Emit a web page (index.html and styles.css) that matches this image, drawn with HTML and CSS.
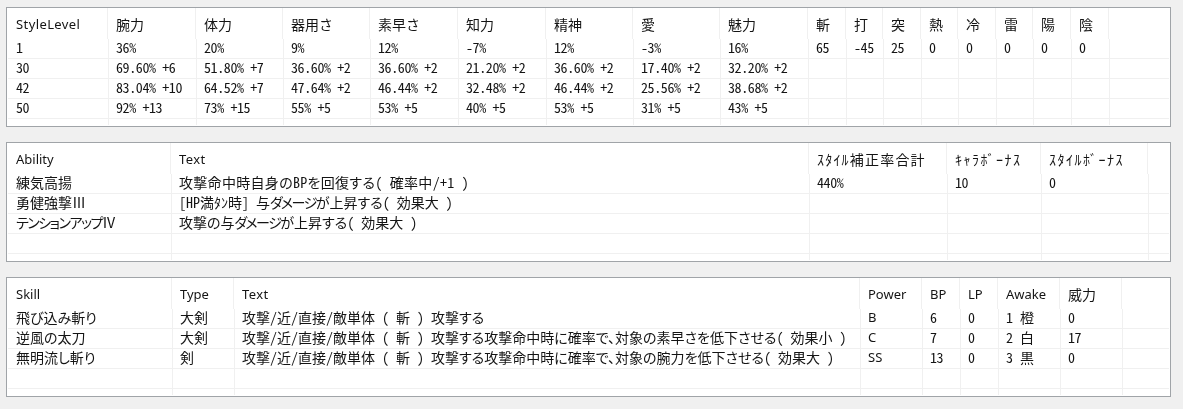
FILE: index.html
```html
<!DOCTYPE html>
<html lang="ja">
<head>
<meta charset="utf-8">
<title>Style detail</title>
<link rel="stylesheet" href="styles.css">
</head>
<body>
<section class="panel">
<table class="grid stats">
<colgroup><col class="c100"><col class="c88"><col class="c87"><col class="c87"><col class="c88"><col class="c88"><col class="c87"><col class="c87"><col class="c88"><col class="c38"><col class="c37"><col class="c38"><col class="c37"><col class="c38"><col class="c37"><col class="c38"><col class="c38"><col></colgroup>
<thead><tr><th class="wide">StyleLevel</th><th class="cjk">腕力</th><th class="cjk">体力</th><th class="cjk">器用さ</th><th class="cjk">素早さ</th><th class="cjk">知力</th><th class="cjk">精神</th><th class="cjk">愛</th><th class="cjk">魅力</th><th class="cjk">斬</th><th class="cjk">打</th><th class="cjk">突</th><th class="cjk">熱</th><th class="cjk">冷</th><th class="cjk">雷</th><th class="cjk">陽</th><th class="cjk">陰</th><th></th></tr></thead>
<tbody>
<tr><td>1</td><td>36%</td><td>20%</td><td>9%</td><td>12%</td><td>-7%</td><td>12%</td><td>-3%</td><td>16%</td><td>65</td><td>-45</td><td>25</td><td>0</td><td>0</td><td>0</td><td>0</td><td>0</td><td></td></tr>
<tr><td>30</td><td>69.60% +6</td><td>51.80% +7</td><td>36.60% +2</td><td>36.60% +2</td><td>21.20% +2</td><td>36.60% +2</td><td>17.40% +2</td><td>32.20% +2</td><td></td><td></td><td></td><td></td><td></td><td></td><td></td><td></td><td></td></tr>
<tr><td>42</td><td>83.04% +10</td><td>64.52% +7</td><td>47.64% +2</td><td>46.44% +2</td><td>32.48% +2</td><td>46.44% +2</td><td>25.56% +2</td><td>38.68% +2</td><td></td><td></td><td></td><td></td><td></td><td></td><td></td><td></td><td></td></tr>
<tr><td>50</td><td>92% +13</td><td>73% +15</td><td>55% +5</td><td>53% +5</td><td>40% +5</td><td>53% +5</td><td>31% +5</td><td>43% +5</td><td></td><td></td><td></td><td></td><td></td><td></td><td></td><td></td><td></td></tr>
<tr class="stub"><td></td><td></td><td></td><td></td><td></td><td></td><td></td><td></td><td></td><td></td><td></td><td></td><td></td><td></td><td></td><td></td><td></td><td></td></tr>
</tbody>
</table>
</section>
<section class="panel">
<table class="grid ability">
<colgroup><col class="c163"><col class="c638"><col class="c138"><col class="c94"><col class="c107"><col></colgroup>
<thead><tr><th>Ability</th><th class="wide">Text</th><th class="cjk kana-mixed">ｽﾀｲﾙ補正率合計</th><th class="cjk kana">ｷｬﾗﾎﾞｰﾅｽ</th><th class="cjk kana">ｽﾀｲﾙﾎﾞｰﾅｽ</th><th></th></tr></thead>
<tbody>
<tr><td class="txt">練気高揚</td><td class="txt long">攻撃命中時自身のBPを回復する( 確率中/+1 )</td><td>440%</td><td>10</td><td>0</td><td></td></tr>
<tr><td class="txt">勇健強撃Ⅲ</td><td class="txt">[HP満ﾀﾝ時] 与<span class="tight">ダメージ</span>が上昇する( 効果大 )</td><td></td><td></td><td></td><td></td></tr>
<tr><td class="txt"><span class="tight">テンションアップ</span>Ⅳ</td><td class="txt">攻撃の与<span class="tight">ダメージ</span>が上昇する( 効果大 )</td><td></td><td></td><td></td><td></td></tr>
<tr><td></td><td></td><td></td><td></td><td></td><td></td></tr>
<tr class="stub"><td></td><td></td><td></td><td></td><td></td><td></td></tr>
</tbody>
</table>
</section>
<section class="panel">
<table class="grid skill">
<colgroup><col class="c164"><col class="c62"><col class="c626"><col class="c62"><col class="c38"><col class="c38"><col class="c62"><col class="c62"><col></colgroup>
<thead><tr><th>Skill</th><th>Type</th><th class="wide">Text</th><th>Power</th><th>BP</th><th>LP</th><th>Awake</th><th class="cjk">威力</th><th></th></tr></thead>
<tbody>
<tr><td class="txt">飛び込み斬り</td><td class="txt">大剣</td><td class="txt">攻撃/近/直接/敵単体 ( 斬 ) 攻撃する</td><td class="rank">B</td><td>6</td><td>0</td><td class="txt">1 橙</td><td>0</td><td></td></tr>
<tr><td class="txt">逆風の太刀</td><td class="txt">大剣</td><td class="txt">攻撃/近/直接/敵単体 ( 斬 ) 攻撃する攻撃命中時に確率で、対象の素早さを低下させる( 効果小 )</td><td class="rank">C</td><td>7</td><td>0</td><td class="txt">2 白</td><td>17</td><td></td></tr>
<tr><td class="txt">無明流し斬り</td><td class="txt">剣</td><td class="txt">攻撃/近/直接/敵単体 ( 斬 ) 攻撃する攻撃命中時に確率で、対象の腕力を低下させる( 効果大 )</td><td class="rank">SS</td><td>13</td><td>0</td><td class="txt">3 黒</td><td>0</td><td></td></tr>
<tr><td></td><td></td><td></td><td></td><td></td><td></td><td></td><td></td><td></td></tr>
<tr class="stub"><td></td><td></td><td></td><td></td><td></td><td></td><td></td><td></td><td></td></tr>
</tbody>
</table>
</section>
</body>
</html>
```

FILE: styles.css
```css
html, body {
  margin: 0;
  background: #f0f0f0;
}
body {
  padding: 7px 12px 0 6px;
  font-family: "Noto Sans CJK JP", "Noto Sans", sans-serif;
  font-size: 13px;
  color: #141414;
}
.panel {
  box-sizing: border-box;
  height: 120px;
  margin-bottom: 15px;
  padding: 0 1px 1px 1px;
  background: #fff;
  border: 1px solid #a0a4a8;
  overflow: hidden;
}
.grid {
  table-layout: fixed;
  width: 100%;
  height: 117px;
  border-collapse: separate;
  border-spacing: 0;
  filter: blur(0.3px);
}
.grid th {
  height: 31px;
  padding: 0 0 0 8px;
  text-align: left;
  font-family: "Noto Sans", sans-serif;
  font-weight: 400;
  font-size: 13px;
  line-height: 16px;
  border-right: 1px solid #f0f0f0;
  white-space: nowrap;
  box-sizing: border-box;
}
.grid th:last-child { border-right: 0; }
.grid th.wide { letter-spacing: 0.4px; }
.grid th.cjk {
  font-family: "Noto Sans CJK JP", sans-serif;
  font-size: 14px;
}
.grid th.kana { letter-spacing: 1.5px; }
.grid th.kana-mixed { letter-spacing: 1.2px; }
.grid td {
  height: 20px;
  padding: 0 0 3px 7px;
  font-size: 14px;
  letter-spacing: -0.4px;
  font-feature-settings: "hwid" 1;
  line-height: 16px;
  border-left: 1px solid #f0f0f0;
  border-bottom: 1px solid #f0f0f0;
  white-space: nowrap;
  box-sizing: border-box;
}
.grid td.txt {
  letter-spacing: 0;
  font-feature-settings: "hwid" 1, "palt" 1;
}
.grid td.long { letter-spacing: 0.3px; }
.grid td.rank {
  font-family: "Noto Sans", sans-serif;
  font-size: 13px;
  letter-spacing: 0;
  font-feature-settings: normal;
}
.tight { letter-spacing: -1.5px; }
.grid td:first-child { border-left: 0; padding-left: 8px; }
.grid .stub td {
  height: 6px;
  padding: 0;
  border-bottom: 0;
  line-height: 0;
}
.c37 { width: 37px; }
.c38 { width: 38px; }
.c62 { width: 62px; }
.c87 { width: 87px; }
.c88 { width: 88px; }
.c94 { width: 94px; }
.c100 { width: 100px; }
.c107 { width: 107px; }
.c138 { width: 138px; }
.c163 { width: 163px; }
.c164 { width: 164px; }
.c626 { width: 626px; }
.c638 { width: 638px; }
```
